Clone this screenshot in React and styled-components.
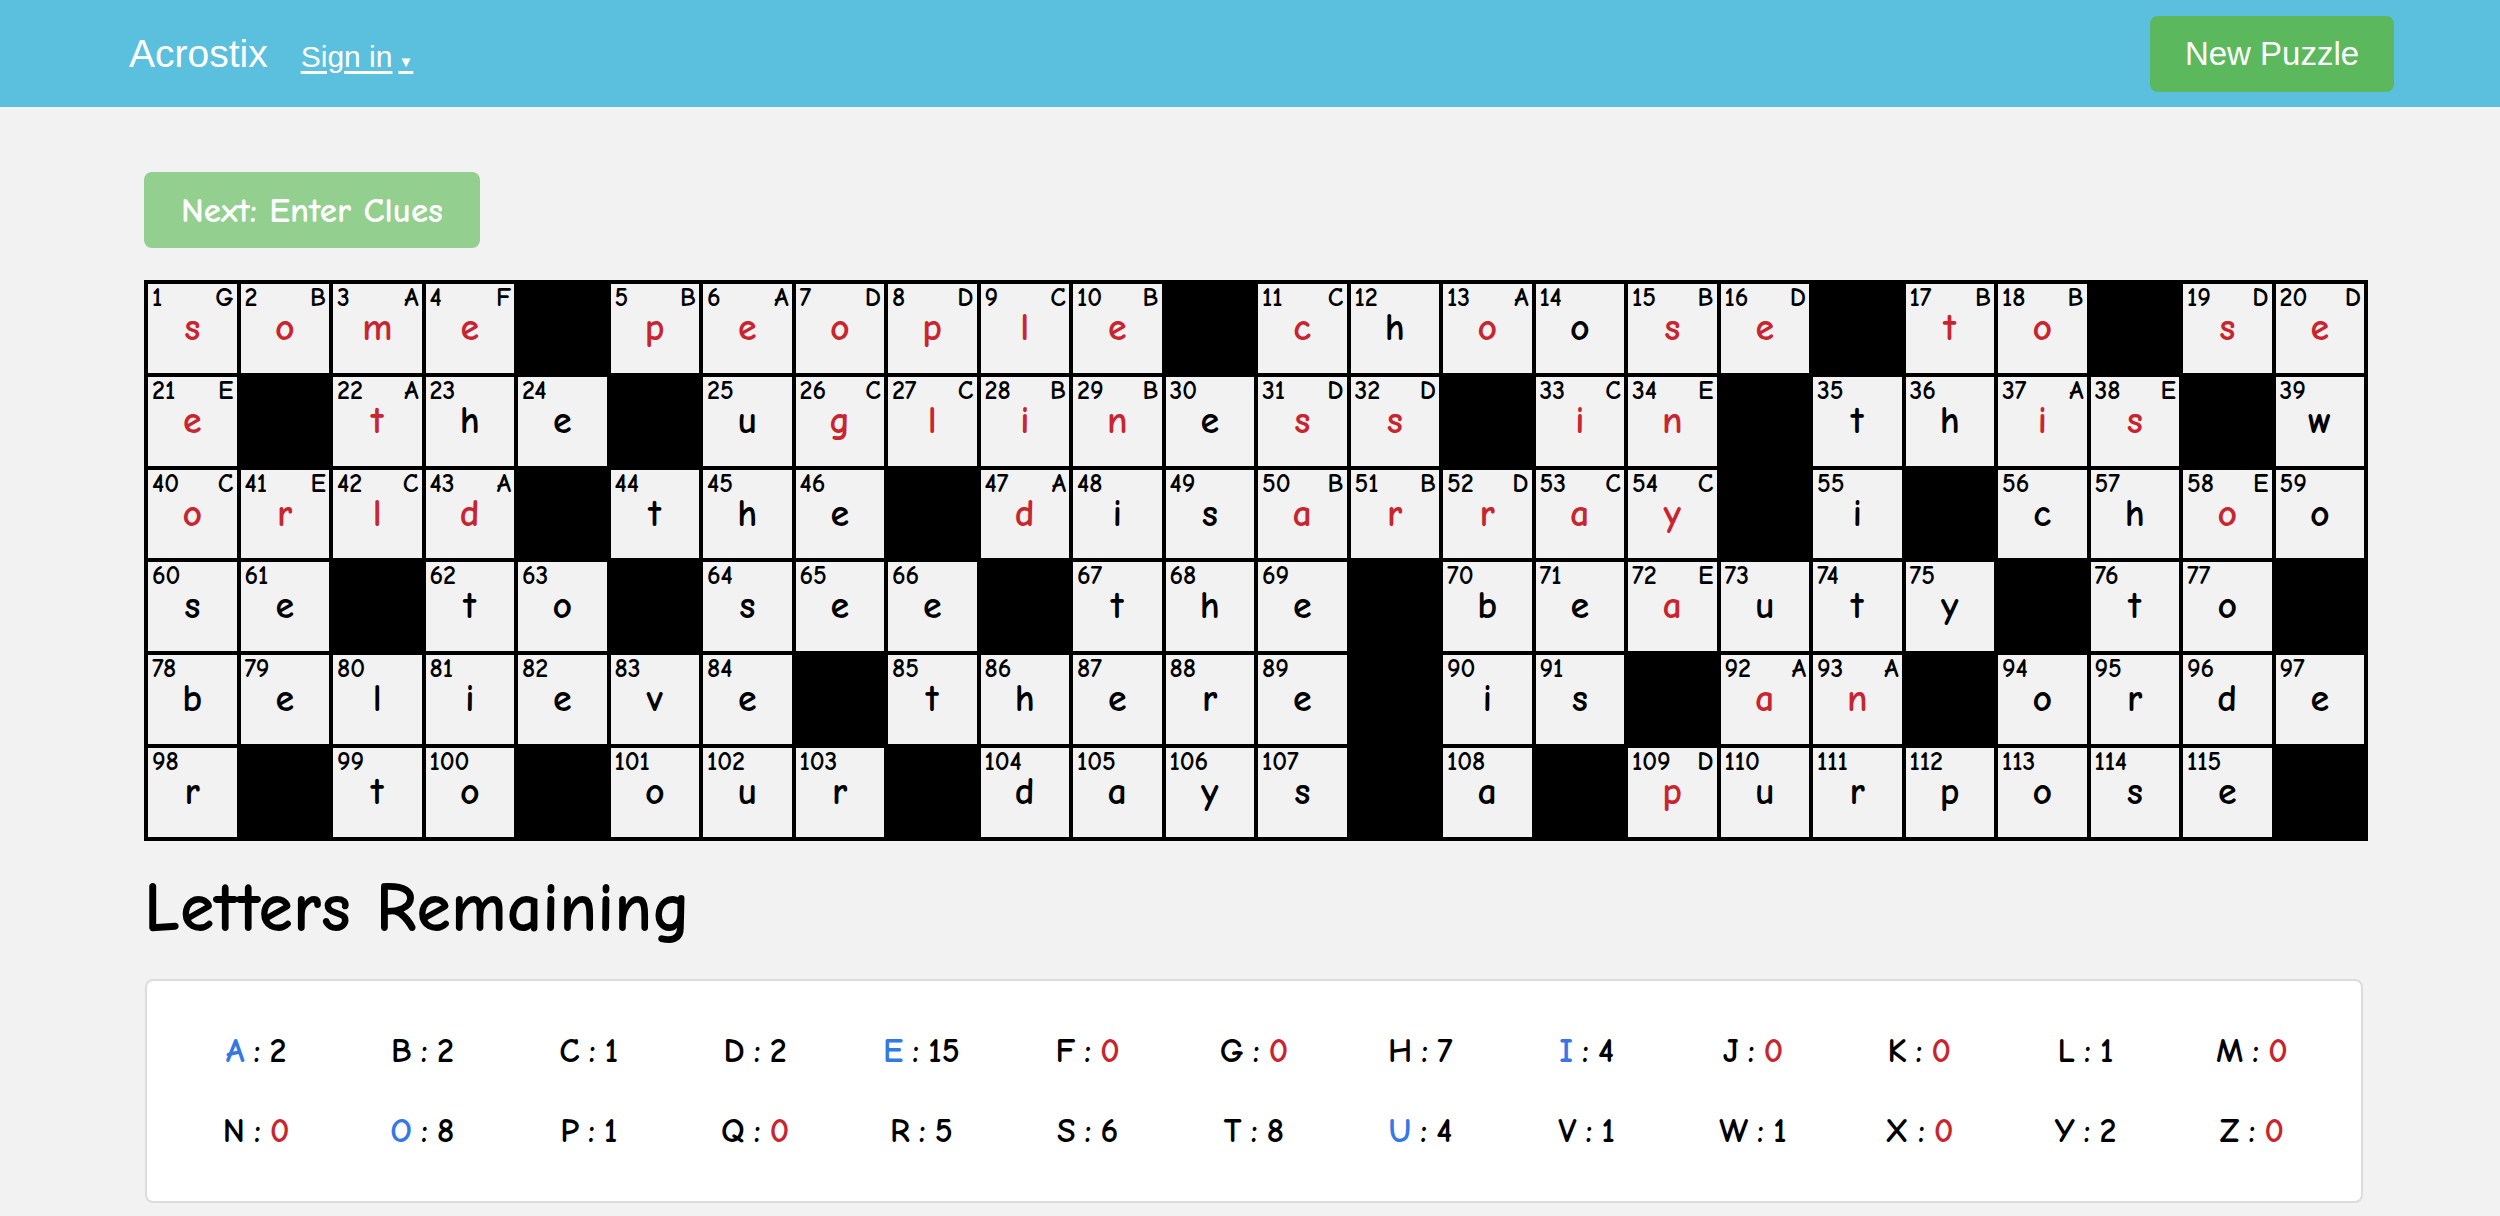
import React from 'react';
import styled, { createGlobalStyle } from 'styled-components';

const comic = `"Comic Sans MS", "Comic Neue", "Open Sans", sans-serif`;

const GlobalStyle = createGlobalStyle`
  html, body {
    margin: 0;
    padding: 0;
    background: #f2f2f2;
  }
  body {
    font-family: ${comic};
    font-weight: 700;
    color: #000;
  }
`;

const NavBar = styled.header`
  display: flex;
  align-items: center;
  height: 107px;
  padding: 0 106px 0 129px;
  background: #5bc0de;
  font-family: "Liberation Sans", Arial, sans-serif;
  font-weight: 400;
  color: #fff;
`;

const Brand = styled.a`
  font-size: 39px;
  color: #fff;
  text-decoration: none;
`;

const SignIn = styled.a`
  margin-left: 33px;
  margin-top: 6px;
  font-size: 30px;
  color: #fff;
  text-decoration: underline;
  text-underline-offset: 4px;
`;

const Caret = styled.span`
  font-size: 15px;
  margin-left: 6px;
`;

const NewPuzzleButton = styled.button`
  margin-left: auto;
  width: 244px;
  height: 76px;
  background: #5cb85c;
  border: 0;
  border-radius: 8px;
  color: #fff;
  font-family: "Liberation Sans", Arial, sans-serif;
  font-size: 33px;
`;

const Main = styled.main`
  padding: 65px 0 0 144px;
`;

const NextButton = styled.button`
  display: block;
  width: 336px;
  height: 76px;
  background: #93cf8f;
  border: 0;
  border-radius: 8px;
  color: #fff;
  font-family: ${comic};
  font-weight: 700;
  font-size: 35px;
`;

const Board = styled.div`
  display: grid;
  grid-template-columns: repeat(24, 1fr);
  grid-auto-rows: 88.8px;
  gap: 4px;
  padding: 4px;
  margin-top: 32px;
  width: 2224px;
  box-sizing: border-box;
  background: #000;
`;

const Cell = styled.div`
  display: flex;
  flex-direction: column;
  background: ${p => (p.$black ? '#000' : '#f2f2f2')};
`;

const CellTop = styled.div`
  display: flex;
  justify-content: space-between;
  height: 24px;
  padding: 2px 3px 0 4px;
  font-size: 26px;
  line-height: 24px;
`;

const CellLetter = styled.div`
  text-align: center;
  font-size: 38px;
  line-height: 36px;
  color: ${p => (p.$clued ? '#c9252f' : '#000')};
`;

const SectionTitle = styled.h1`
  margin: 28px 0 30px;
  font-size: 70px;
  line-height: 80px;
  font-weight: 700;
`;

const LettersCard = styled.div`
  display: grid;
  grid-template-columns: repeat(13, 1fr);
  grid-auto-rows: 80px;
  align-items: center;
  justify-items: center;
  width: 2218px;
  box-sizing: border-box;
  margin-left: 1px;
  padding: 30px 26px;
  background: #fff;
  border: 2px solid #dcdcdc;
  border-radius: 8px;
  font-size: 34px;
`;

const Tally = styled.div`
  display: flex;
  align-items: baseline;
`;

const TallyLetter = styled.span`
  color: ${p => (p.$vowel ? '#3478e5' : '#000')};
`;

const Sep = styled.span`
  margin: 0 9px;
`;

const TallyCount = styled.span`
  color: ${p => (p.$zero ? '#c9252f' : '#000')};
`;

// "#" = black square, otherwise "number letter [clue]"
const rows = [
  '1 s G|2 o B|3 m A|4 e F|#|5 p B|6 e A|7 o D|8 p D|9 l C|10 e B|#|11 c C|12 h|13 o A|14 o|15 s B|16 e D|#|17 t B|18 o B|#|19 s D|20 e D',
  '21 e E|#|22 t A|23 h|24 e|#|25 u|26 g C|27 l C|28 i B|29 n B|30 e|31 s D|32 s D|#|33 i C|34 n E|#|35 t|36 h|37 i A|38 s E|#|39 w',
  '40 o C|41 r E|42 l C|43 d A|#|44 t|45 h|46 e|#|47 d A|48 i|49 s|50 a B|51 r B|52 r D|53 a C|54 y C|#|55 i|#|56 c|57 h|58 o E|59 o',
  '60 s|61 e|#|62 t|63 o|#|64 s|65 e|66 e|#|67 t|68 h|69 e|#|70 b|71 e|72 a E|73 u|74 t|75 y|#|76 t|77 o|#',
  '78 b|79 e|80 l|81 i|82 e|83 v|84 e|#|85 t|86 h|87 e|88 r|89 e|#|90 i|91 s|#|92 a A|93 n A|#|94 o|95 r|96 d|97 e',
  '98 r|#|99 t|100 o|#|101 o|102 u|103 r|#|104 d|105 a|106 y|107 s|#|108 a|#|109 p D|110 u|111 r|112 p|113 o|114 s|115 e|#',
];

const cells = rows.flatMap(r => r.split('|')).map(c => {
  if (c === '#') return null;
  const [num, letter, clue] = c.split(' ');
  return { num, letter, clue };
});

const counts = {
  A: 2, B: 2, C: 1, D: 2, E: 15, F: 0, G: 0, H: 7, I: 4, J: 0, K: 0, L: 1, M: 0,
  N: 0, O: 8, P: 1, Q: 0, R: 5, S: 6, T: 8, U: 4, V: 1, W: 1, X: 0, Y: 2, Z: 0,
};

export default function App() {
  return (
    <>
      <GlobalStyle />
      <NavBar>
        <Brand href="#">Acrostix</Brand>
        <SignIn href="#">
          Sign in<Caret>▼</Caret>
        </SignIn>
        <NewPuzzleButton>New Puzzle</NewPuzzleButton>
      </NavBar>
      <Main>
        <NextButton>Next: Enter Clues</NextButton>
        <Board>
          {cells.map((c, i) =>
            c ? (
              <Cell key={i}>
                <CellTop>
                  <span>{c.num}</span>
                  <span>{c.clue}</span>
                </CellTop>
                <CellLetter $clued={!!c.clue}>{c.letter}</CellLetter>
              </Cell>
            ) : (
              <Cell key={i} $black />
            )
          )}
        </Board>
        <SectionTitle>Letters Remaining</SectionTitle>
        <LettersCard>
          {Object.entries(counts).map(([l, n]) => (
            <Tally key={l}>
              <TallyLetter $vowel={'AEIOU'.includes(l)}>{l}</TallyLetter>
              <Sep>:</Sep>
              <TallyCount $zero={n === 0}>{n}</TallyCount>
            </Tally>
          ))}
        </LettersCard>
      </Main>
    </>
  );
}
